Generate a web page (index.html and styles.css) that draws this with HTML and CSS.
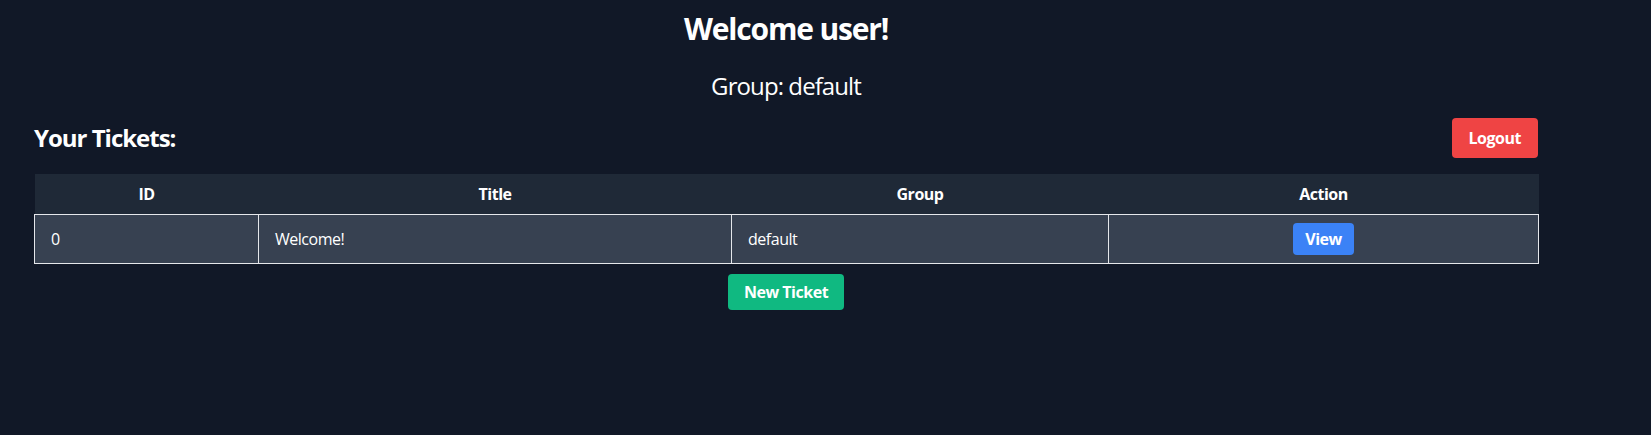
FILE: index.html
```html
<!DOCTYPE html>
<html lang="en">
<head>
<meta charset="utf-8">
<title>Tickets</title>
<link rel="stylesheet" href="styles.css">
</head>
<body>
  <main class="page">
    <h1 class="welcome">Welcome user!</h1>
    <p class="group-line">Group: default</p>
    <div class="tickets-bar">
      <h2 class="tickets-title">Your Tickets:</h2>
      <button class="btn btn-logout">Logout</button>
    </div>
    <table class="tickets">
      <colgroup>
        <col class="col-id">
        <col class="col-title">
        <col class="col-group">
        <col class="col-action">
      </colgroup>
      <thead>
        <tr>
          <th>ID</th>
          <th>Title</th>
          <th>Group</th>
          <th>Action</th>
        </tr>
      </thead>
      <tbody>
        <tr>
          <td>0</td>
          <td>Welcome!</td>
          <td>default</td>
          <td class="cell-action"><button class="btn btn-view">View</button></td>
        </tr>
      </tbody>
    </table>
    <div class="new-wrap">
      <button class="btn btn-new">New Ticket</button>
    </div>
  </main>
</body>
</html>
```
FILE: styles.css
```css
* { box-sizing: border-box; }
html, body {
  margin: 0;
  padding: 0;
  background: #111827;
  color: #ffffff;
  font-family: "Open Sans", "Noto Sans", sans-serif;
  letter-spacing: -0.03em;
  height: 100%;
}
.page {
  width: 1504px;
  margin-left: 34px;
  padding-top: 11px;
}
.welcome {
  margin: 0;
  font-size: 30px;
  line-height: 36px;
  font-weight: 700;
  letter-spacing: -0.039em;
  text-align: center;
}
.group-line {
  margin: 23px 0 16px;
  font-size: 24px;
  line-height: 32px;
  letter-spacing: -0.038em;
  text-align: center;
}
.tickets-bar {
  display: flex;
  justify-content: space-between;
  align-items: center;
  margin-bottom: 16px;
}
.tickets-title {
  margin: 0;
  font-size: 24px;
  line-height: 32px;
  font-weight: 700;
  letter-spacing: -0.042em;
}
.btn {
  border: 0;
  border-radius: 4px;
  color: #ffffff;
  font-family: inherit;
  letter-spacing: inherit;
  font-weight: 700;
  font-size: 16px;
  line-height: 24px;
  cursor: pointer;
}
.btn-logout {
  background: #ef4444;
  padding: 8px 17px;
}
.btn-view {
  background: #3b82f6;
  padding: 4px 12px;
  display: inline-block;
  vertical-align: middle;
}
.btn-new {
  background: #10b981;
  padding: 8px 16px;
  line-height: 20px;
}
.tickets {
  width: 100%;
  border-collapse: collapse;
  table-layout: fixed;
  font-size: 16px;
  line-height: 24px;
}
.col-id { width: 224px; }
.col-title { width: 473px; }
.col-group { width: 377px; }
.col-action { width: 430px; }
.tickets th {
  background: #1f2937;
  padding: 8px 16px;
  font-weight: 700;
  text-align: center;
}
.tickets td {
  background: #374151;
  border: 1px solid #e5e7eb;
  padding: 8px 16px;
  text-align: left;
  vertical-align: middle;
}
.tickets td.cell-action { text-align: center; }
.new-wrap {
  display: flex;
  justify-content: center;
  margin-top: 10px;
}
```
